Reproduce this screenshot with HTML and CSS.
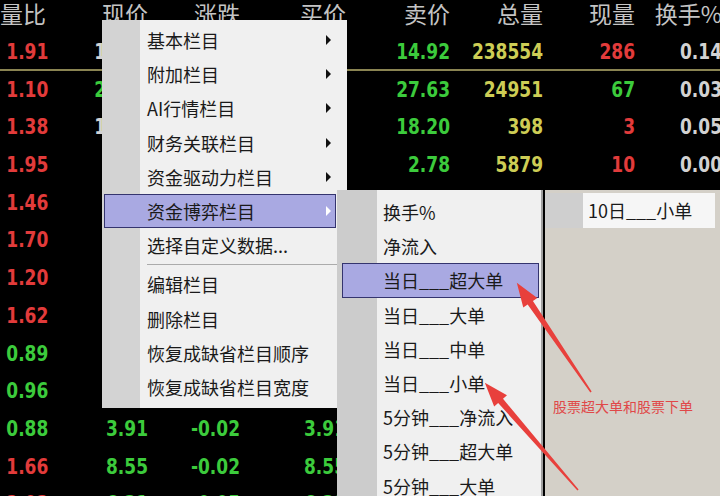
FILE: index.html
```html
<!DOCTYPE html>
<html lang="zh-CN">

<head>
    <meta charset="UTF-8">
    <title>栏目设置</title>
    <link rel="stylesheet" href="styles.css">
</head>

<body>
    <div class="screen">
        <div class="quote">
            <div class="row head">
                <span>量比</span><span>现价</span><span>涨跌</span><span>买价</span><span>卖价</span><span>总量</span><span>现量</span><span>换手%</span>
            </div>
            <div class="row sel">
                <span class="up">1.91</span><span class="flat">14.91</span><span class="dn">-0.01</span><span class="dn">14.91</span><span class="dn">14.92</span><span class="vol">238554</span><span class="up">286</span><span class="flat">0.14</span>
            </div>
            <div class="row">
                <span class="up">1.10</span><span class="dn">27.62</span><span class="dn">-0.15</span><span class="dn">27.62</span><span class="dn">27.63</span><span class="vol">24951</span><span class="dn">67</span><span class="flat">0.03</span>
            </div>
            <div class="row">
                <span class="up">1.38</span><span class="flat">18.19</span><span class="dn">-0.04</span><span class="dn">18.19</span><span class="dn">18.20</span><span class="vol">398</span><span class="up">3</span><span class="flat">0.05</span>
            </div>
            <div class="row">
                <span class="up">1.95</span><span class="dn">2.77</span><span class="dn">-0.01</span><span class="dn">2.77</span><span class="dn">2.78</span><span class="vol">5879</span><span class="up">10</span><span class="flat">0.00</span>
            </div>
            <div class="row">
                <span class="up">1.46</span><span class="up">5.62</span><span class="up">0.03</span><span class="up">5.61</span><span class="up">5.62</span><span class="vol">1204</span><span class="up">12</span><span class="flat">0.02</span>
            </div>
            <div class="row">
                <span class="up">1.70</span><span class="up">9.27</span><span class="up">0.11</span><span class="up">9.26</span><span class="up">9.27</span><span class="vol">8830</span><span class="dn">45</span><span class="flat">0.08</span>
            </div>
            <div class="row">
                <span class="up">1.20</span><span class="dn">4.36</span><span class="dn">-0.02</span><span class="dn">4.35</span><span class="dn">4.36</span><span class="vol">3317</span><span class="up">8</span><span class="flat">0.01</span>
            </div>
            <div class="row">
                <span class="up">1.62</span><span class="up">7.05</span><span class="up">0.06</span><span class="up">7.04</span><span class="up">7.05</span><span class="vol">6102</span><span class="up">21</span><span class="flat">0.04</span>
            </div>
            <div class="row">
                <span class="dn">0.89</span><span class="dn">6.18</span><span class="dn">-0.03</span><span class="dn">6.17</span><span class="dn">6.18</span><span class="vol">2245</span><span class="dn">5</span><span class="flat">0.02</span>
            </div>
            <div class="row">
                <span class="dn">0.96</span><span class="dn">5.40</span><span class="dn">-0.01</span><span class="dn">5.39</span><span class="dn">5.40</span><span class="vol">1873</span><span class="up">16</span><span class="flat">0.01</span>
            </div>
            <div class="row">
                <span class="dn">0.88</span><span class="dn">3.91</span><span class="dn">-0.02</span><span class="dn">3.91</span><span class="dn">3.92</span><span class="vol">9516</span><span class="dn">30</span><span class="flat">0.06</span>
            </div>
            <div class="row">
                <span class="up">1.66</span><span class="dn">8.55</span><span class="dn">-0.02</span><span class="dn">8.55</span><span class="dn">8.56</span><span class="vol">4410</span><span class="up">9</span><span class="flat">0.03</span>
            </div>
            <div class="row">
                <span class="up">2.03</span><span class="dn">6.31</span><span class="dn">-0.05</span><span class="dn">6.31</span><span class="dn">6.32</span><span class="vol">7721</span><span class="up">14</span><span class="flat">0.05</span>
            </div>
        </div>

        <div class="menu main-menu">
            <div class="item more">基本栏目</div>
            <div class="item more">附加栏目</div>
            <div class="item more">AI行情栏目</div>
            <div class="item more">财务关联栏目</div>
            <div class="item more">资金驱动力栏目</div>
            <div class="item more on">资金博弈栏目</div>
            <div class="item">选择自定义数据...</div>
            <div class="sep"></div>
            <div class="item">编辑栏目</div>
            <div class="item">删除栏目</div>
            <div class="item">恢复成缺省栏目顺序</div>
            <div class="item">恢复成缺省栏目宽度</div>
        </div>

        <div class="menu sub-menu">
            <div class="item">换手%</div>
            <div class="item">净流入</div>
            <div class="item on">当日___超大单</div>
            <div class="item">当日___大单</div>
            <div class="item">当日___中单</div>
            <div class="item">当日___小单</div>
            <div class="item">5分钟___净流入</div>
            <div class="item">5分钟___超大单</div>
            <div class="item">5分钟___大单</div>
        </div>

        <div class="menu more-menu">
            <div class="item">10日___小单</div>
        </div>

        <svg class="notes" width="720" height="496" viewBox="0 0 720 496">
            <g fill="#e8403c">
                <polygon transform="translate(591 392) rotate(-124.2)" points="0,-0.8 108,-3.2 108,-8.5 132,0 108,8.5 108,3.2 0,0.8" />
                <polygon transform="translate(578 490) rotate(-131)" points="0,-0.8 118,-3.2 118,-8.5 142,0 118,8.5 118,3.2 0,0.8" />
            </g>
        </svg>
        <div class="note-text">股票超大单和股票下单</div>
    </div>
</body>

</html>
```

FILE: styles.css
```css
* {
    margin: 0;
    padding: 0;
    box-sizing: border-box;
}

body {
    background: #000;
    overflow: hidden;
}

.screen {
    position: relative;
    width: 720px;
    height: 496px;
    overflow: hidden;
}

/* quote table */
.quote .row {
    display: grid;
    grid-template-columns: 45px 103px 92px 106px 104px 93px 92px 87px;
    height: 37.7px;
    line-height: 37.7px;
    text-align: right;
    white-space: nowrap;
    font-family: "DejaVu Sans Condensed", "DejaVu Sans", sans-serif;
    font-stretch: condensed;
    font-weight: bold;
    font-size: 22px;
}

.quote .row span {
    transform: scaleX(0.86);
    transform-origin: right center;
}

.quote .row.head {
    height: 33px;
    line-height: 27px;
    font-family: "Noto Sans CJK SC", sans-serif;
    font-weight: normal;
    font-size: 23px;
    color: #c4c4c4;
}

.quote .row.head span {
    transform: none;
}

.quote .row.sel {
    border-bottom: 2px solid #8a8452;
}

.up {
    color: #e23b3b;
}

.dn {
    color: #3ccb3c;
}

.vol {
    color: #cdcd55;
}

.flat {
    color: #d2d2d2;
}

/* popup menus */
.menu {
    position: absolute;
    font-family: "Noto Sans CJK SC", sans-serif;
    font-size: 18px;
    color: #1a1a1a;
    white-space: nowrap;
}

.menu .item {
    position: relative;
    height: 34.2px;
    line-height: 34.2px;
}

.menu .item.on {
    background: #a9a9e2;
    box-shadow: inset 0 0 0 1px #34346e;
}

.menu .item.more::after {
    content: '';
    position: absolute;
    right: 5px;
    top: 50%;
    margin-top: -5px;
    border-left: 5px solid #111;
    border-top: 5px solid transparent;
    border-bottom: 5px solid transparent;
}

.menu .item.on.more::after {
    border-left-color: #fff;
}

.main-menu {
    left: 102px;
    top: 20px;
    width: 245px;
    padding: 3px 0 4px;
    background: linear-gradient(to right, #d3d3d3 38px, #f0f0f0 38px);
}

.main-menu .item {
    margin: 0 11px 0 2px;
    padding-left: 43px;
}

.main-menu .sep {
    height: 5px;
    margin: 0 7px 0 45px;
    background: linear-gradient(#ababab, #ababab) no-repeat 0 2px / 100% 1px;
}

.sub-menu {
    left: 337px;
    top: 190px;
    width: 206px;
    height: 320px;
    padding-top: 5px;
    border-right: 2px solid #a0a0a0;
    background: linear-gradient(to right, #cccccc 40px, #f0f0f0 40px);
}

.sub-menu .item {
    margin: 0 2px 0 5px;
    padding-left: 41px;
}

.more-menu {
    left: 545px;
    top: 190px;
    width: 175px;
    height: 306px;
    padding-top: 3px;
    background: #d4d0c8;
}

.more-menu .item {
    height: 35px;
    line-height: 35px;
    margin-right: 5px;
    padding-left: 43px;
    background: linear-gradient(to right, #cfcfcf 38px, #f6f6f6 38px);
}

/* annotation */
.notes {
    position: absolute;
    left: 0;
    top: 0;
    pointer-events: none;
}

.note-text {
    position: absolute;
    left: 553px;
    top: 396px;
    font-family: "Noto Sans CJK SC", sans-serif;
    font-size: 14px;
    line-height: 20px;
    color: #e04848;
}
```
